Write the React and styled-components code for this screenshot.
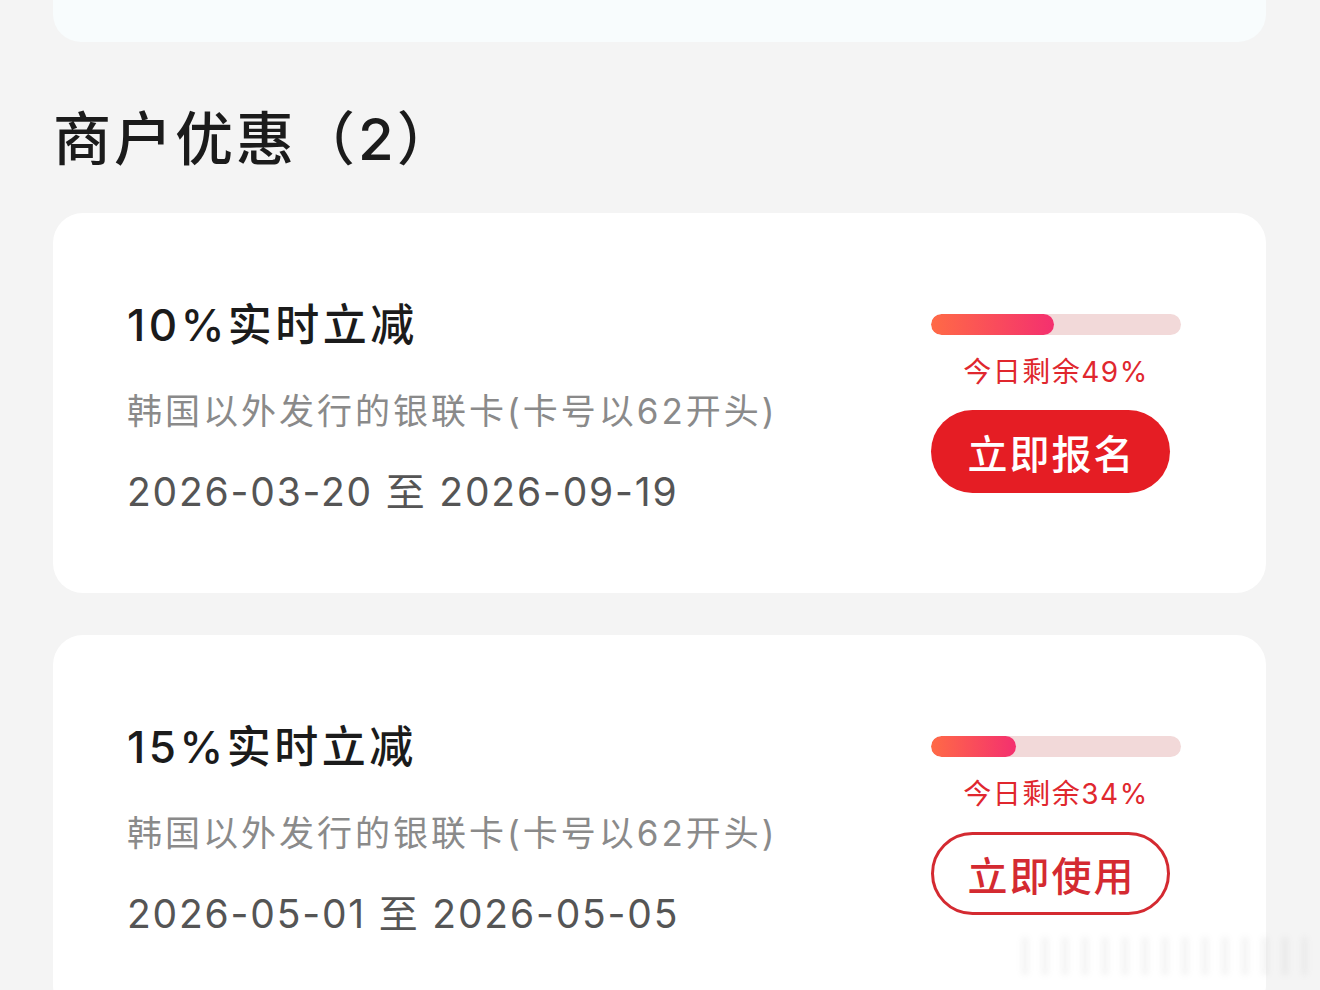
import React from "react";
import styled, { createGlobalStyle } from "styled-components";

const Global = createGlobalStyle`
  html, body {
    margin: 0;
    padding: 0;
    background: #f4f4f4;
  }
  body {
    font-family: Inter, "Noto Sans CJK SC", "Noto Sans", sans-serif;
    -webkit-font-smoothing: antialiased;
  }
`;

const Page = styled.div`
  position: relative;
  width: 1320px;
  height: 990px;
  overflow: hidden;
  padding: 0 54px 0 53px;
  box-sizing: border-box;
`;

const TopCard = styled.div`
  height: 42px;
  background: #f8fcfd;
  border-radius: 0 0 28px 28px;
`;

const SectionTitle = styled.h2`
  margin: 0;
  padding: 62px 0 0 0;
  height: 109px;
  box-sizing: border-box;
  font-size: 58px;
  line-height: 70px;
  font-weight: 500;
  color: #1b1b1b;
  letter-spacing: 3px;
`;

const List = styled.div`
  display: flex;
  flex-direction: column;
  gap: 42px;
  margin-top: 62px;
`;

const Card = styled.div`
  display: flex;
  justify-content: space-between;
  align-items: flex-start;
  background: #ffffff;
  border-radius: 30px;
  height: 380px;
  box-sizing: border-box;
  padding: 82px 85px 0 74px;
`;

const Info = styled.div`
  display: flex;
  flex-direction: column;
`;

const OfferTitle = styled.div`
  font-size: 44px;
  line-height: 60px;
  font-weight: 500;
  color: #1b1b1b;
  letter-spacing: 3.5px;
`;

const Scope = styled.div`
  margin-top: 31px;
  font-size: 35px;
  line-height: 50px;
  color: #8a8a8a;
  letter-spacing: 3px;
`;

const Period = styled.div`
  margin-top: 31px;
  font-size: 39px;
  line-height: 50px;
  color: #555555;
  letter-spacing: 1.8px;
`;

const Side = styled.div`
  width: 250px;
  margin-top: 19px;
  display: flex;
  flex-direction: column;
  align-items: flex-start;
`;

const Track = styled.div`
  width: 250px;
  height: 21px;
  border-radius: 11px;
  background: #f2d9d9;
  overflow: hidden;
`;

const Fill = styled.div`
  height: 100%;
  border-radius: 11px;
  background: linear-gradient(90deg, #ff6a46 0%, #f4306f 100%);
`;

const Remain = styled.div`
  width: 250px;
  margin-top: 19px;
  text-align: center;
  font-size: 28px;
  line-height: 36px;
  color: #e0272e;
  letter-spacing: 1.5px;
`;

const ActionButton = styled.button`
  margin-top: 20px;
  width: 239px;
  height: 83px;
  border-radius: 42px;
  box-sizing: border-box;
  padding: 0 0 0 2px;
  font-family: inherit;
  font-size: 40px;
  font-weight: 500;
  letter-spacing: 2px;
  cursor: pointer;
  ${({ $outline }) =>
    $outline
      ? `
    background: #ffffff;
    color: #d42a31;
    border: 3px solid #d42a31;
  `
      : `
    background: #e51d24;
    color: #ffffff;
    border: none;
  `}
`;

const Watermark = styled.div`
  position: absolute;
  left: 1022px;
  top: 937px;
  width: 285px;
  height: 38px;
  opacity: 0.18;
  filter: blur(3px);
  background: repeating-linear-gradient(
    90deg,
    rgba(140, 140, 140, 0.6) 0px,
    rgba(140, 140, 140, 0.6) 6px,
    transparent 6px,
    transparent 20px
  );
`;

const offers = [
  {
    title: "10%实时立减",
    scope: "韩国以外发行的银联卡(卡号以62开头)",
    period: "2026-03-20 至 2026-09-19",
    remain: 49,
    action: "立即报名",
    outline: false,
  },
  {
    title: "15%实时立减",
    scope: "韩国以外发行的银联卡(卡号以62开头)",
    period: "2026-05-01 至 2026-05-05",
    remain: 34,
    action: "立即使用",
    outline: true,
  },
];

export default function App() {
  return (
    <>
      <Global />
      <Page>
        <TopCard />
        <SectionTitle>商户优惠（2）</SectionTitle>
        <List>
          {offers.map((o) => (
            <Card key={o.title}>
              <Info>
                <OfferTitle>{o.title}</OfferTitle>
                <Scope>{o.scope}</Scope>
                <Period>{o.period}</Period>
              </Info>
              <Side>
                <Track>
                  <Fill style={{ width: `${o.remain}%` }} />
                </Track>
                <Remain>今日剩余{o.remain}%</Remain>
                <ActionButton $outline={o.outline}>{o.action}</ActionButton>
              </Side>
            </Card>
          ))}
        </List>
        <Watermark />
      </Page>
    </>
  );
}
